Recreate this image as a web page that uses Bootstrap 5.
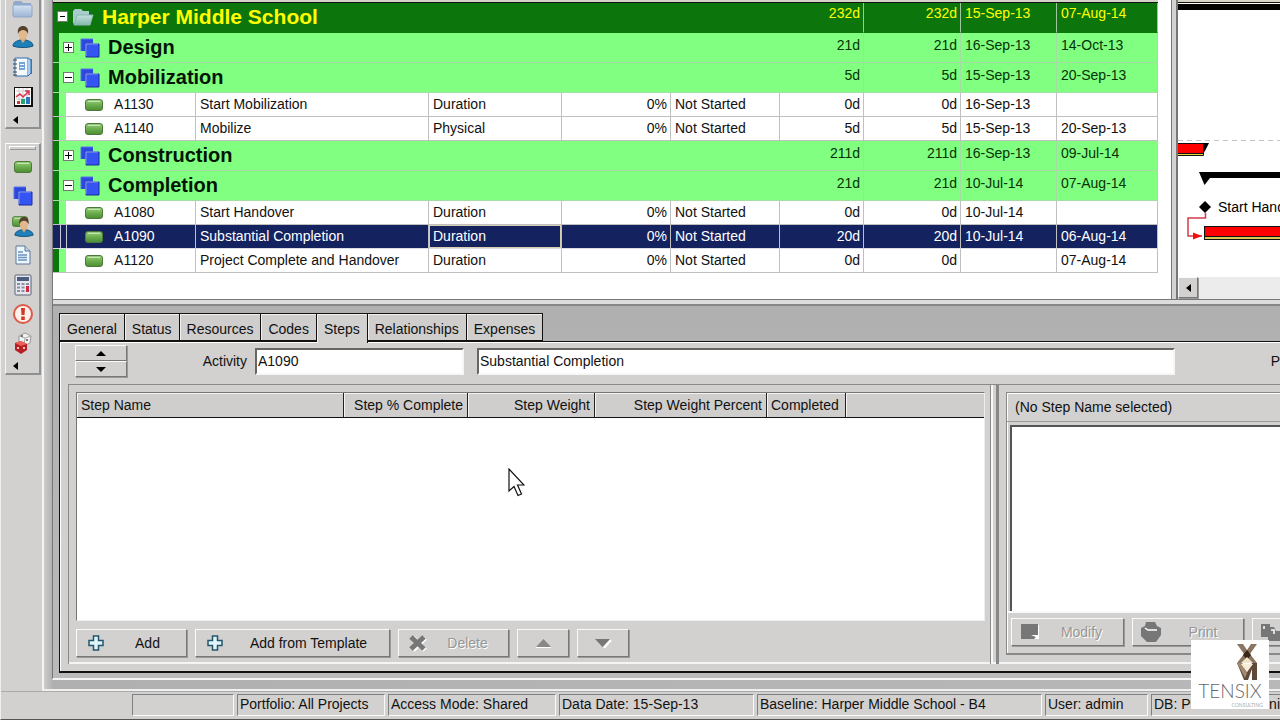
<!DOCTYPE html>
<html lang="en">
<head>
<meta charset="utf-8">
<meta name="viewport" content="width=device-width, initial-scale=1">
<title>Activities - Harper Middle School</title>
<link href="https://cdn.jsdelivr.net/npm/bootstrap@5.3.0/dist/css/bootstrap.min.css" rel="stylesheet">
<style>
:root{--face:#d2d1d0;--shade:#8a8a8a;--strip:#b5b5b5;--navy:#14235f;--leaf:#80ff80;--forest:#0c760c}
body{font:14px/20px "Liberation Sans",Arial,sans-serif;color:#111;background:var(--face)}
button,input{font:inherit;color:inherit}
.app{border-left:1px solid #eee;border-bottom:1px solid #555}
.minh0{min-height:0}.minw0{min-width:0}

/* side toolbars */
.side{width:41px;padding-left:4px}
.tools{width:36px;border:1px solid #f4f4f4;border-right:2px solid #8f8f8f;border-bottom:2px solid #8f8f8f;border-top:0}
.tools button{border:0;background:none;padding:0;height:29px;width:34px;display:flex;align-items:center;justify-content:center}
.tools .tall{height:30px}
.tools .cut{height:22px;align-items:flex-start}
.tools .more{height:15px;justify-content:flex-start;padding-left:7px}
.grip{height:4px;margin:2px 3px;border:1px solid #fff;border-bottom-color:#999;border-right-color:#999}
.tools.second{border-top:1px solid #fff;margin-top:14px}

/* work area */
.work{border-left:2px solid #f4f4f4;border-bottom:2px solid #f0f0f0;background:linear-gradient(90deg,#ccc,#b0b0b0 9px,#b8b8b8);padding:0 0 9px 8px}
.work-in{border-left:1px solid #777;border-bottom:2px solid #f4f4f4}
.upper{min-height:299px;background:#fff}
.colheads{height:3px;background:#d5d3c8;border-bottom:1px solid #111}
.grid-pane{flex:none;padding-right:13px}
.acts{table-layout:fixed;width:1105px;border-collapse:separate;border-spacing:0}
.acts td{height:24px;line-height:22px;padding:0 3px 0 4px;border-right:1px solid #c0c0c0;border-bottom:1px solid #c0c0c0;white-space:nowrap;vertical-align:top;overflow:hidden}
.acts td.num{text-align:right}
.acts .cell-id{padding-left:32px;background:linear-gradient(90deg,var(--forest) 6px,var(--leaf) 6px 13px,#fff 13px)}
.acts .wbs td{height:30px;background:var(--leaf);line-height:20px;padding-top:2px;border-color:#a4dca4;color:#063306}
.acts .wbs td.head{padding:0 0 0 10px;background:linear-gradient(90deg,var(--forest) 6px,var(--leaf) 6px);border-right-color:var(--leaf);font-size:20px;line-height:29px;font-weight:700;color:#041504}
.acts .root td,.acts .root td.head{background:var(--forest);color:#ff0;padding-top:0;border-bottom-color:var(--forest);border-right-color:#9fc79f}
.acts .root td.head{padding-left:4px;font-size:21px;border-right-color:var(--forest);line-height:27px}
.acts .picked td{background:var(--navy);color:#fff;border-bottom-color:#dcdce4}
.acts .picked .cell-id{background:linear-gradient(90deg,var(--navy) 7px,#c8c8d8 7px 8px,var(--navy) 8px 13px,#c8c8d8 13px 14px,var(--navy) 14px)}
.acts .picked .focus{box-shadow:inset 0 0 0 1px #d8cfae}
.acts .wico{margin:0 8px 0 6px}
.box{flex:none;width:11px;height:11px;border:1px solid #777;background:#fff;padding:0;display:block}
.box svg{display:block}
.sash{width:7px;flex:none;background:#d4d4d4;border-left:1px solid #777;border-right:2px solid #777}
.gantt svg.chart{display:block;width:100%;height:274px}
.hbar{height:22px;background:#ececec}
.hbar button,.raised{background:var(--face);border:1px solid;border-color:#fafafa #777 #777 #fafafa;box-shadow:1px 1px 0 #999;padding:0}
.hbar button{width:20px;height:21px;display:flex;align-items:center;justify-content:center}
.hsplit{height:7px;flex:none;background:#dcdcdc;border-top:1px solid #777;border-bottom:2px solid #868686}

/* details */
.lower{background:linear-gradient(#b0b0b0,#bbb);padding:7px 0 5px 6px}
.tabs{height:29px;position:relative;z-index:1}
.tabs button{height:28px;border:1px solid #111;border-left:0;background:#cfcecc;box-shadow:inset 1px 1px 0 #f0f0f0;padding:3px 7px 0;line-height:24px}
.tabs button:first-child{border-left:1px solid #111}
.tabs button.active{height:30px;background:var(--face);border-bottom:0;padding-bottom:3px}
.sheet{margin-top:-1px;border:solid #111;border-width:1px 0 2px 1px;box-shadow:inset 1px 1px 0 #fff;background:var(--face);padding:3px 0 7px 8px}
.spin{width:52px;margin:0 0 0 7px}
.spin button{height:16px;display:flex;align-items:center;justify-content:center}
.sunk{border:solid;border-width:2px;border-color:#666 #f6f6f6 #f6f6f6 #666;background:#fff;border-radius:0;height:27px;padding:0 1px;outline:0}
.frame{border:solid #8a8a8a;border-width:1px 0 0 1px;box-shadow:inset 0 -2px 0 #f4f4f4}
.list-box{border:1px solid #777;border-right-color:#eee;border-bottom-color:#eee;background:#fff}
.steps{table-layout:fixed;width:100%;border-collapse:separate;border-spacing:0}
.steps th{height:25px;font-weight:400;line-height:22px;padding:0 4px;border-right:1px solid #222;border-bottom:1px solid #111;box-shadow:inset 1px 1px 0 #f4f4f4;background:#cfcecd;white-space:nowrap}
.steps th:last-child{border-right:0}
.steps .num{text-align:right}
.cmd{height:28px;display:flex;align-items:center}
.cmd span{flex:1;text-align:center}
.cmd:disabled{color:#979797;text-shadow:1px 1px 0 #fff}
.vsash{width:9px;border:solid #888;border-width:0 3px 0 1px;box-shadow:inset 2px 0 0 #f8f8f8}
.right-pane{width:281px;padding:7px 0 9px 7px}
.side-box{border:solid #888;border-width:1px 0 2px 1px;box-shadow:inset 1px 1px 0 #fff}
.memo{border:solid #555;border-width:2px 0 0 2px;background:#fff}

/* status bar */
.status{height:28px;padding:2px 0 3px 131px;gap:3px;border-top:1px solid #aaa}
.status div{height:22px;border:1px solid;border-color:#808080 #fafafa #fafafa #808080;padding:0 2px;line-height:18px;white-space:nowrap;overflow:hidden;flex:none}
.brand{position:absolute;right:11px;bottom:10px;width:78px;height:69px;background:#fff;z-index:5}
.brand svg{display:block;margin:4px 0 0 45px}
.brand .bname{font:300 19px/19px "Lato Light",Lato,sans-serif;color:#666;text-align:center}
.brand .bsub{font:5px/5px Lato,sans-serif;color:#aaa;text-align:right;padding-right:6px;margin-top:3px}
.pointer{position:absolute;left:507px;top:468px;z-index:6}
</style>
</head>
<body>
<svg width="0" height="0" class="position-absolute" aria-hidden="true">
<defs>
<linearGradient id="gg" x2="0" y2="1"><stop stop-color="#9ccf84"/><stop offset=".5" stop-color="#6bae4c"/><stop offset="1" stop-color="#4d8b35"/></linearGradient>
<linearGradient id="gf" x2="0" y2="1"><stop stop-color="#d4e2f4"/><stop offset="1" stop-color="#9db4d4"/></linearGradient>
<linearGradient id="gr" x2="0" y2="1"><stop stop-color="#c4e0e0"/><stop offset="1" stop-color="#86b8ac"/></linearGradient>
<symbol id="pill" viewBox="0 0 18 12"><rect x=".5" y=".5" width="17" height="11" rx="2.5" fill="url(#gg)" stroke="#4c7a38"/><path d="M3 2.5h12" stroke="#c4e5b2"/></symbol>
<symbol id="wbs" viewBox="0 0 20 20"><path d="M1 1h12v12H1z" fill="#2d48dc"/><path d="M1 13V1h12" fill="none" stroke="#5a72ee"/><path d="M6 6h13v13H6z" fill="#3554f4" stroke="#1b2aa0"/><path d="M6 18V6h12" fill="none" stroke="#9aacff"/></symbol>
<symbol id="folder" viewBox="0 0 22 18"><path d="M1 15V3l2-2h6l2 2h8v12l-2 2H3z" fill="#8fa8cc"/><path d="M1 16V6l1-1h17l1 1v10l-1 1H2z" fill="url(#gf)" stroke="#8ea6c8"/></symbol>
<symbol id="folder-open" viewBox="0 0 22 18"><path d="M1 15V3l2-2h6l2 2h6v12l-2 2H3z" fill="#a8cccc"/><path d="M2 17l3-10h16l-3 10z" fill="url(#gr)" stroke="#8ab8b4"/></symbol>
<symbol id="plus" viewBox="0 0 16 16"><path d="M5.500 1h5v4.500H15v5h-4.500V15h-5v-4.500H1v-5h4.500z" fill="#dff4fb" stroke="#24566b" stroke-width="1.500"/></symbol>
<symbol id="man" viewBox="0 0 22 22"><path d="M1 20c0-4 4-5 7-6h6c3 1 7 2 7 6-5 2-15 2-20 0z" fill="#1f7fb8" stroke="#11557f"/><path d="M8 13l3 4 3-4v-2H8z" fill="#d9a878"/><ellipse cx="11" cy="8" rx="4.500" ry="5.500" fill="#e2b98d"/><path d="M6 8C5 2 8 0 11 0s6 2 5 8c-1-3-3-4-5-4s-4 1-5 4z" fill="#54422c"/></symbol>
</defs>
</svg>

<div class="app d-flex flex-column vh-100 overflow-hidden position-relative">
 <div class="d-flex flex-fill minh0">
  <aside class="side flex-shrink-0">
   <div class="tools">
    <button class="cut" aria-label="Projects"><svg width="22" height="18"><use href="#folder"/></svg></button>
    <button class="tall" aria-label="Resources"><svg width="22" height="22"><use href="#man"/></svg></button>
    <button class="tall" aria-label="Reports"><svg width="22" height="22" viewBox="0 0 22 22"><path d="M4 3h16v15H4z" fill="#3a7cc0"/><path d="M3 2h13v18H3z" fill="#f5faff" stroke="#2f6daf"/><path d="M16 2l3 2v13l-3 3" fill="#a9cdf0" stroke="#2f6daf"/><path d="M7 6h6v8H7z" fill="#74a5da"/><path d="M8 8.500h4M8 11.500h4" stroke="#fff"/><path d="M1 4h4M1 8h4M1 12h4M1 16h4M1 19h4" stroke="#445"/></svg></button>
    <button class="tall" aria-label="Tracking"><svg width="22" height="22" viewBox="0 0 22 22"><path d="M2 1h19v20H2z" fill="#111"/><path d="M3 2h16v17H3z" fill="#fff"/><path d="M4 5h14M4 9h14M4 13h14M7 2v16M11 2v16M15 2v16" stroke="#ccc"/><path d="M5 15h3v3H5z" fill="#cc3a3a"/><path d="M9 13h4v5H9z" fill="#29a56a"/><path d="M14 11h4v7h-4z" fill="#2c77c4"/><path d="M4 11l4-3 3 3 6-6m-4 0h4v4" fill="none" stroke="#e0314b" stroke-width="1.500"/></svg></button>
    <button class="more" aria-label="More"><svg width="5" height="8"><path d="M5 0v8L0 4z"/></svg></button>
   </div>
   <div class="tools second">
    <div class="grip"></div>
    <button aria-label="Activities"><svg width="18" height="12"><use href="#pill"/></svg></button>
    <button class="tall" aria-label="WBS"><svg width="20" height="20"><use href="#wbs"/></svg></button>
    <button aria-label="Assignments"><svg width="24" height="24" viewBox="0 0 24 24"><use href="#pill" x="1" y="2" width="16" height="11"/><use href="#man" x="3" y="3" width="20" height="20"/></svg></button>
    <button class="tall" aria-label="Documents"><svg width="18" height="20" viewBox="0 0 18 20"><path d="M2 1h9l5 5v13H2z" fill="#eef5fc" stroke="#5b7896"/><path d="M11 1v5h5" fill="#bcd1e8" stroke="#5b7896"/><path d="M4 7h5M4 10h9M4 12.500h9M4 15h9" stroke="#6a93bd" stroke-width="1.300"/></svg></button>
    <button aria-label="Expenses"><svg width="18" height="22" viewBox="0 0 18 22"><rect x="1" y="1" width="16" height="20" rx="1" fill="#e6e8f0" stroke="#5a6272"/><path d="M3 3h12v4H3z" fill="#4a5d80"/><path d="M3 10h3m1.500 0h3M3 13.500h3m1.500 0h3M3 17h3m1.500 0h3m1.500-7h3" stroke="#8a90a0" stroke-width="2"/><path d="M12 12h3v6h-3z" fill="#d02840"/></svg></button>
    <button aria-label="Issues"><svg width="22" height="22" viewBox="0 0 22 22"><circle cx="11" cy="11" r="9" fill="#fff0ec" stroke="#dc5a48" stroke-width="2"/><path d="M9 5h4l-.5 7h-3zM9.200 13.500h3.600V17H9.200z" fill="#d23a28"/></svg></button>
    <button class="tall" aria-label="Risks"><svg width="20" height="22" viewBox="0 0 20 22"><path d="M6 4l6-3 6 3-1 7-6 3-5-4z" fill="#f2f2f2" stroke="#999"/><path d="M6 4l6 2 6-2M12 6l-1 7" stroke="#aaa" fill="none"/><path d="M2 11l6-2 6 3v6l-6 4-6-4z" fill="#b81f22"/><path d="M2 11l6-2 6 3-6 2z" fill="#ea6258"/><circle cx="5" cy="16" r="1" fill="#fff"/><circle cx="11" cy="16" r="1" fill="#fff"/><circle cx="9" cy="4" r="1" fill="#555"/><circle cx="14" cy="8" r="1" fill="#555"/></svg></button>
    <button class="more" aria-label="More"><svg width="5" height="8"><path d="M5 0v8L0 4z"/></svg></button>
   </div>
  </aside>

  <main class="work flex-fill minw0 d-flex flex-column">
   <div class="work-in flex-fill minh0 d-flex flex-column">
    <section class="upper d-flex flex-shrink-0 overflow-hidden">
     <div class="grid-pane">
      <div class="colheads"></div>
      <table class="acts">
       <colgroup><col style="width:143px"><col style="width:233px"><col style="width:133px"><col style="width:109px"><col style="width:109px"><col style="width:84px"><col style="width:97px"><col style="width:96px"><col></colgroup>
       <tbody>
        <tr class="wbs root"><td class="head" colspan="5"><div class="d-flex align-items-center"><button class="box" aria-label="Collapse"><svg width="9" height="9"><path d="M2 4.500h5" stroke="#000"/></svg></button><svg class="ms-1 me-2" width="22" height="18"><use href="#folder-open"/></svg>Harper Middle School</div></td><td class="num">232d</td><td class="num">232d</td><td>15-Sep-13</td><td>07-Aug-14</td></tr>
        <tr class="wbs"><td class="head" colspan="5"><div class="d-flex align-items-center"><button class="box" aria-label="Expand"><svg width="9" height="9"><path d="M1 4.500h7M4.500 1v7" stroke="#000"/></svg></button><svg class="wico" width="20" height="20"><use href="#wbs"/></svg>Design</div></td><td class="num">21d</td><td class="num">21d</td><td>16-Sep-13</td><td>14-Oct-13</td></tr>
        <tr class="wbs"><td class="head" colspan="5"><div class="d-flex align-items-center"><button class="box" aria-label="Collapse"><svg width="9" height="9"><path d="M1 4.500h7" stroke="#000"/></svg></button><svg class="wico" width="20" height="20"><use href="#wbs"/></svg>Mobilization</div></td><td class="num">5d</td><td class="num">5d</td><td>15-Sep-13</td><td>20-Sep-13</td></tr>
        <tr><td class="cell-id"><svg class="me-2" width="18" height="12"><use href="#pill"/></svg> A1130</td><td>Start Mobilization</td><td>Duration</td><td class="num">0%</td><td>Not Started</td><td class="num">0d</td><td class="num">0d</td><td>16-Sep-13</td><td></td></tr>
        <tr><td class="cell-id"><svg class="me-2" width="18" height="12"><use href="#pill"/></svg> A1140</td><td>Mobilize</td><td>Physical</td><td class="num">0%</td><td>Not Started</td><td class="num">5d</td><td class="num">5d</td><td>15-Sep-13</td><td>20-Sep-13</td></tr>
        <tr class="wbs"><td class="head" colspan="5"><div class="d-flex align-items-center"><button class="box" aria-label="Expand"><svg width="9" height="9"><path d="M1 4.500h7M4.500 1v7" stroke="#000"/></svg></button><svg class="wico" width="20" height="20"><use href="#wbs"/></svg>Construction</div></td><td class="num">211d</td><td class="num">211d</td><td>16-Sep-13</td><td>09-Jul-14</td></tr>
        <tr class="wbs"><td class="head" colspan="5"><div class="d-flex align-items-center"><button class="box" aria-label="Collapse"><svg width="9" height="9"><path d="M1 4.500h7" stroke="#000"/></svg></button><svg class="wico" width="20" height="20"><use href="#wbs"/></svg>Completion</div></td><td class="num">21d</td><td class="num">21d</td><td>10-Jul-14</td><td>07-Aug-14</td></tr>
        <tr><td class="cell-id"><svg class="me-2" width="18" height="12"><use href="#pill"/></svg> A1080</td><td>Start Handover</td><td>Duration</td><td class="num">0%</td><td>Not Started</td><td class="num">0d</td><td class="num">0d</td><td>10-Jul-14</td><td></td></tr>
        <tr class="picked"><td class="cell-id"><svg class="me-2" width="18" height="12"><use href="#pill"/></svg> A1090</td><td>Substantial Completion</td><td class="focus">Duration</td><td class="num">0%</td><td>Not Started</td><td class="num">20d</td><td class="num">20d</td><td>10-Jul-14</td><td>06-Aug-14</td></tr>
        <tr><td class="cell-id"><svg class="me-2" width="18" height="12"><use href="#pill"/></svg> A1120</td><td>Project Complete and Handover</td><td>Duration</td><td class="num">0%</td><td>Not Started</td><td class="num">0d</td><td class="num">0d</td><td></td><td>07-Aug-14</td></tr>
       </tbody>
      </table>
     </div>
     <div class="sash"></div>
     <div class="gantt flex-fill minw0">
      <div class="colheads"></div>
      <svg class="chart" font-family="Liberation Sans, Arial, sans-serif" font-size="14">
       <rect y="1" width="100%" height="6"/>
       <line y1="137.500" y2="137.500" x2="100%" stroke="#c4c4c4" stroke-dasharray="5 4"/>
       <path d="M-2 140.500h27.500v12H-2z" fill="#e8d840" stroke="#111"/><path d="M-2 141h27v9H-2z" fill="#f00"/><path d="M-2 150.500h27" stroke="#111"/><path d="M25 140h6l-4 8-2 2z"/>
       <path d="M21 169h11v6l-5.500 7z"/><rect x="25" y="169" width="100%" height="6"/>
       <path d="M27 198l6 6-6 6-6-6z"/><text x="40" y="208.500">Start Handover</text>
       <path d="M27.500 210v5H10v18h14" fill="none" stroke="#d33c4c" stroke-width="1.500"/><path d="M15 229.500l9 3.500-9 3.500z" fill="#f01010"/>
       <rect x="26.500" y="223.500" width="100%" height="13" fill="#d6c850" stroke="#111"/><rect x="27" y="224" width="100%" height="9" fill="#f00"/><path d="M27 233.500h2000" stroke="#111"/>
      </svg>
      <div class="hbar"><button aria-label="Scroll left"><svg width="5" height="8"><path d="M5 0v8L0 4z"/></svg></button></div>
     </div>
    </section>
    <div class="hsplit"></div>

    <section class="lower flex-fill minh0 d-flex flex-column">
     <div class="tabs d-flex" role="tablist">
      <button role="tab">General</button><button role="tab">Status</button><button role="tab">Resources</button><button role="tab">Codes</button><button role="tab" class="active" aria-selected="true">Steps</button><button role="tab">Relationships</button><button role="tab">Expenses</button>
     </div>
     <div class="sheet flex-fill minh0 d-flex flex-column">
      <div class="d-flex align-items-center flex-shrink-0" style="margin-bottom:7px">
       <div class="spin d-flex flex-column"><button class="raised" aria-label="Previous activity"><svg width="10" height="5"><path d="M0 5h10L5 0z"/></svg></button><button class="raised" aria-label="Next activity"><svg width="10" height="5"><path d="M0 0h10L5 5z"/></svg></button></div>
       <label for="aid" class="text-end pe-2" style="width:128px">Activity</label>
       <input id="aid" class="sunk" style="width:209px" value="A1090">
       <input id="aname" aria-label="Activity name" class="sunk flex-fill minw0" style="margin-left:13px" value="Substantial Completion">
       <span class="flex-shrink-0 overflow-hidden text-end" style="width:105px">P</span>
      </div>
      <div class="frame flex-fill minh0 d-flex">
       <div class="flex-fill minw0 d-flex flex-column" style="padding:7px 5px 7px 7px">
        <div class="list-box flex-fill minh0">
         <table class="steps">
          <colgroup><col style="width:267px"><col style="width:124px"><col style="width:127px"><col style="width:172px"><col style="width:79px"><col></colgroup>
          <thead><tr><th>Step Name</th><th class="num">Step % Complete</th><th class="num">Step Weight</th><th class="num">Step Weight Percent</th><th>Completed</th><th></th></tr></thead>
         </table>
        </div>
        <div class="d-flex flex-shrink-0 pt-1 mt-1" style="gap:8px">
         <button class="raised cmd" style="width:111px;padding:0 11px"><svg width="16" height="16"><use href="#plus"/></svg><span class="ps-3">Add</span></button>
         <button class="raised cmd" style="width:195px;padding:0 11px"><svg width="16" height="16"><use href="#plus"/></svg><span class="ps-3">Add from Template</span></button>
         <button class="raised cmd" style="width:111px;padding:0 9px" disabled><svg width="20" height="18" viewBox="0 0 20 18"><path d="M4 3l12 12M16 3L4 15" stroke="#fff" stroke-width="5" transform="translate(1 1)"/><path d="M3 3l13 12M16 3L3 15" stroke="#777" stroke-width="5"/></svg><span class="ps-2">Delete</span></button>
         <button class="raised cmd justify-content-center" style="width:52px" disabled aria-label="Move up"><svg width="15" height="9"><path d="M0 8h15L7.500 0z" fill="#888"/><path d="M0 8.500h15" stroke="#fff"/></svg></button>
         <button class="raised cmd justify-content-center" style="width:52px" disabled aria-label="Move down"><svg width="17" height="9"><path d="M9 9l7-8" stroke="#fff" stroke-width="2"/><path d="M0 0h15L7.500 8z" fill="#777"/></svg></button>
        </div>
       </div>
       <div class="vsash flex-shrink-0"></div>
       <div class="right-pane flex-shrink-0 d-flex flex-column">
        <div class="side-box flex-fill minh0 d-flex flex-column">
         <div class="flex-shrink-0" style="height:29px;line-height:29px;padding-left:8px;border-bottom:1px solid #999">(No Step Name selected)</div>
         <div class="memo flex-fill" style="margin:3px 0 0 3px"></div>
         <div class="d-flex flex-shrink-0 border-top border-2 border-light overflow-hidden" style="gap:8px;padding:5px 0 7px 4px">
          <button class="raised cmd flex-shrink-0" style="width:113px;padding:0 8px" disabled><svg width="20" height="18" viewBox="0 0 20 18"><path d="M2 2h17v14H2z" fill="#fff"/><path d="M1 1h17v11l-4 4H1z" fill="#777"/><path d="M11 12h7v3z" fill="#fff"/></svg><span class="ps-2">Modify</span></button>
          <button class="raised cmd flex-shrink-0" style="width:112px;padding:0 7px" disabled><svg width="22" height="22" viewBox="0 0 22 22"><path d="M6 1h9l2 4 4 2v7l-5 7H7l-6-6V7l4-2z" fill="#777"/><path d="M5 7l3 2h9" stroke="#fff" stroke-width="1.500" fill="none"/></svg><span class="ps-2">Print</span></button>
          <button class="raised cmd flex-shrink-0" style="width:113px;padding:0 7px" disabled aria-label="Copy"><svg width="24" height="20" viewBox="0 0 24 20"><path d="M1 2h9v3h4l2 4h7v10H8v-4H1z" fill="#777"/><path d="M4 4v3M11 8h3v4" stroke="#fff" fill="none" stroke-width="1.500"/></svg></button>
         </div>
        </div>
       </div>
      </div>
     </div>
    </section>
   </div>
  </main>
 </div>

 <footer class="status d-flex flex-shrink-0">
  <div style="width:102px"></div><div style="width:148px">Portfolio: All Projects</div><div style="width:168px">Access Mode: Shared</div><div style="width:195px">Data Date: 15-Sep-13</div><div style="width:285px">Baseline: Harper Middle School - B4</div><div style="width:103px">User: admin</div><div class="flex-fill d-flex justify-content-between" style="border-right:0;padding-right:0"><span>DB: P6</span><span>ni</span></div>
 </footer>

 <div class="brand">
  <svg width="22" height="37" viewBox="0 0 22 37"><path d="M1 0h6l4 6 4-6h6l-7 10 7 9H1l7-9z" fill="#8a7560"/><path d="M11 6l4 5-4 5-4-5z" fill="#3a2618"/><path d="M5 19l6-6 6 6z" fill="#f1e3c8"/><path d="M1 19h5l5 9 5-9h5v17h-5V25l-4 11h-4z" fill="#5f4a38"/><path d="M1 19h5l5 10-2 5z" fill="#a08a70"/><path d="M5 20h12l-6 8z" fill="#f6ecd8"/></svg>
  <div class="bname">TENSIX</div><div class="bsub">CONSULTING</div>
 </div>
 <svg class="pointer" width="17" height="30" viewBox="0 0 17 30" aria-hidden="true"><path d="M1 1v22l5-4.500 4 9 3.500-1.500-4-9H16z" fill="#fff" stroke="#111" stroke-width="1.200"/></svg>
</div>
<script src="https://cdn.jsdelivr.net/npm/bootstrap@5.3.0/dist/js/bootstrap.bundle.min.js"></script>
</body>
</html>
